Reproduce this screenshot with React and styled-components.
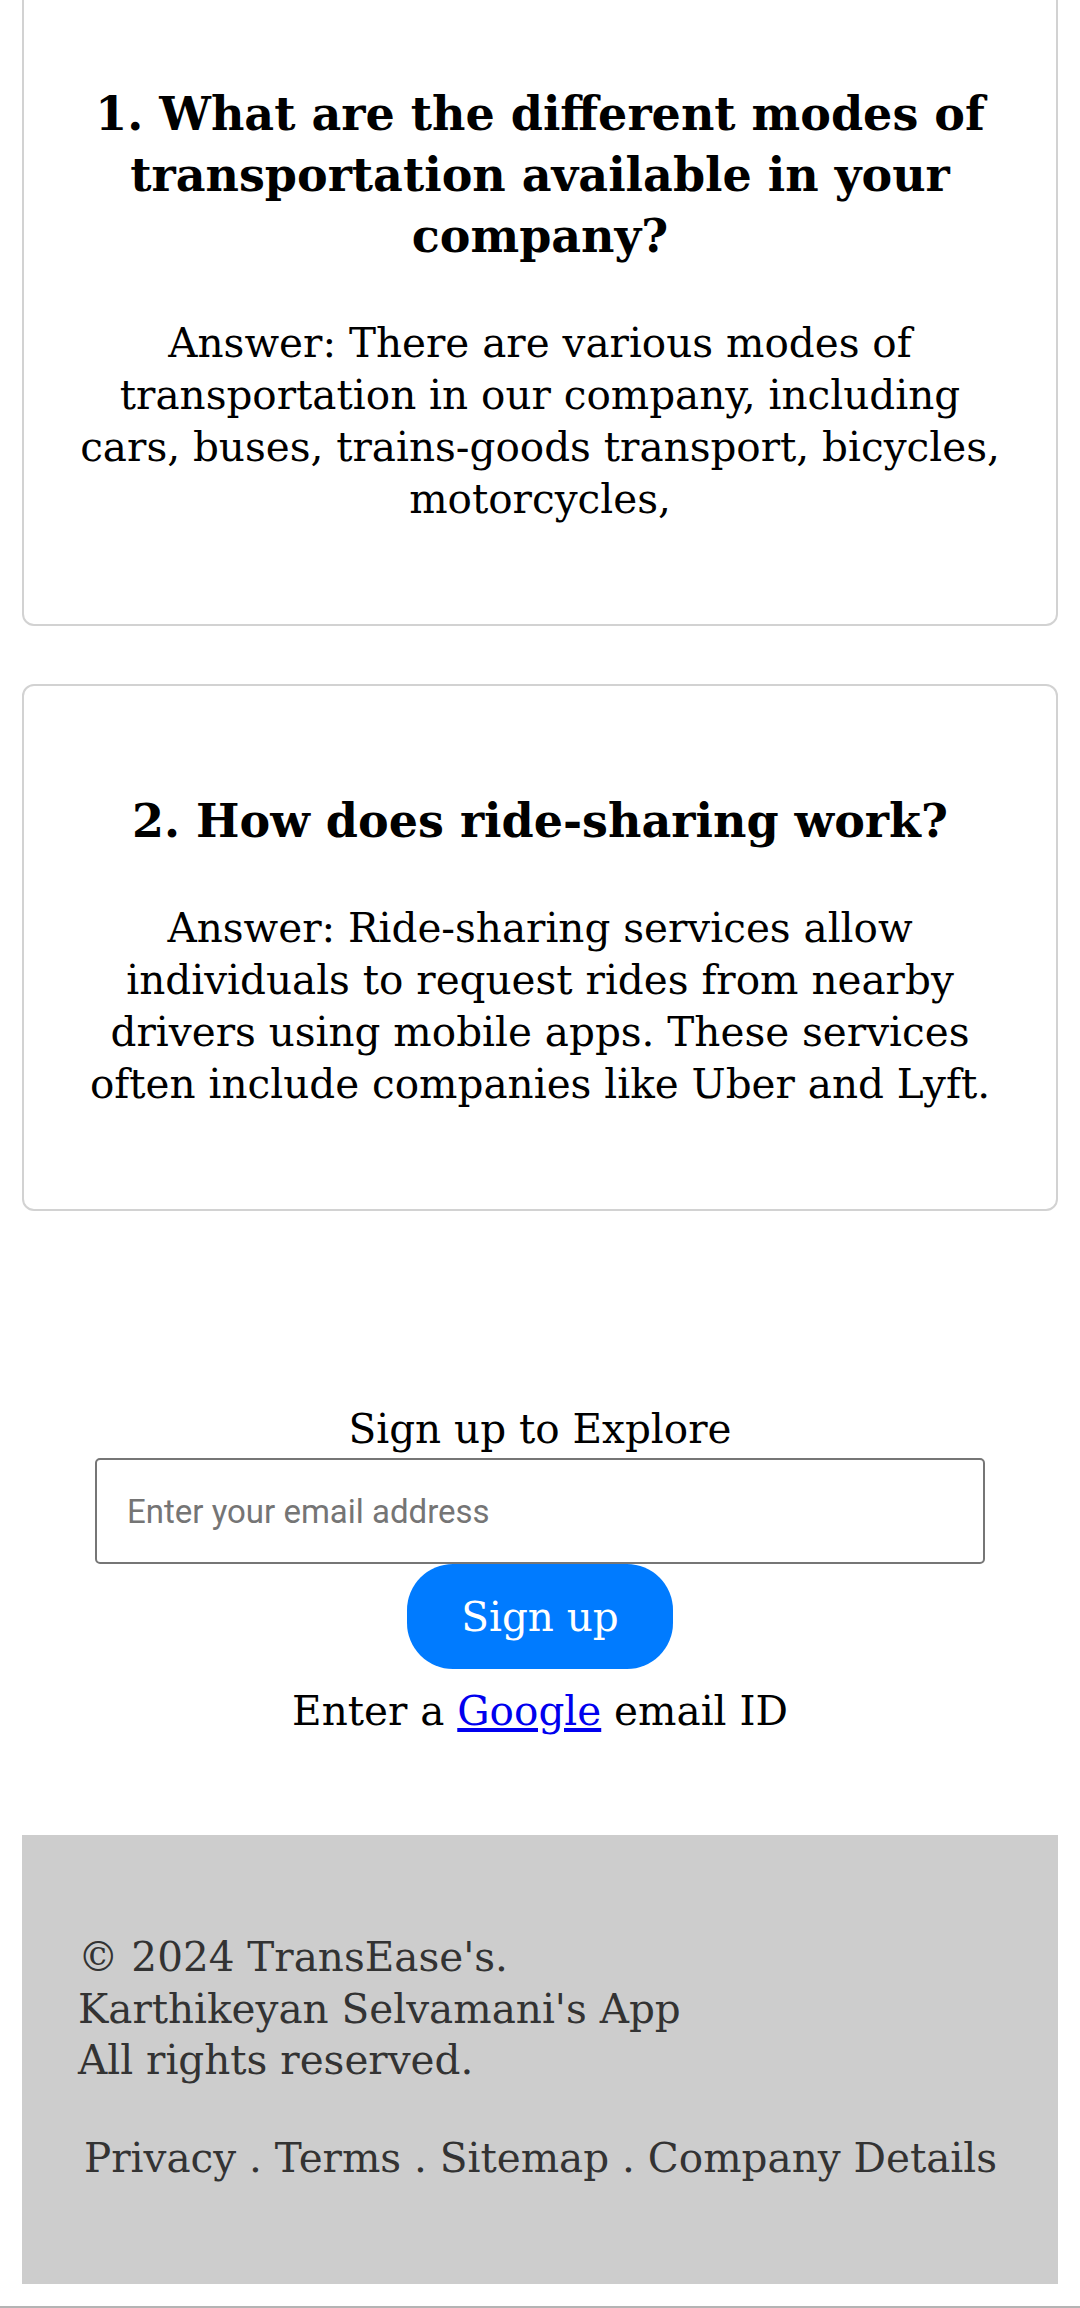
import React from 'react'
import styled, { createGlobalStyle } from 'styled-components'

const faqs = [
  {
    id: 1,
    question: '1. What are the different modes of transportation available in your company?',
    answer:
      'Answer: There are various modes of transportation in our company, including cars, buses, trains-goods transport, bicycles, motorcycles,'
  },
  {
    id: 2,
    question: '2. How does ride-sharing work?',
    answer:
      'Answer: Ride-sharing services allow individuals to request rides from nearby drivers using mobile apps. These services often include companies like Uber and Lyft.'
  }
]

const links = ['Privacy', 'Terms', 'Sitemap', 'Company Details']

const App = () => {
  return (
    <>
      <GlobalStyle />
      <DivPage>
        <DivFaqList>
          {faqs.map(faq => (
            <DivFaqCard key={faq.id}>
              <H3Question>{faq.question}</H3Question>
              <PAnswer>{faq.answer}</PAnswer>
            </DivFaqCard>
          ))}
        </DivFaqList>

        <DivSignUp>
          <LabelSignUp htmlFor="email">Sign up to Explore</LabelSignUp>
          <InputEmail id="email" type="email" placeholder="Enter your email address" />
          <ButtonSignUp>Sign up</ButtonSignUp>
          <PHint>
            Enter a <AGoogle href="#">Google</AGoogle> email ID
          </PHint>
        </DivSignUp>

        <FooterPage>
          <PCopyright>
            © 2024 TransEase's.
            <br />
            Karthikeyan Selvamani's App
            <br />
            All rights reserved.
          </PCopyright>
          <PLinks>{links.join(' . ')}</PLinks>
        </FooterPage>
        <DivBottomLine />
      </DivPage>
    </>
  )
}

const GlobalStyle = createGlobalStyle`
  body {
    margin: 0;
    background: #ffffff;
    font-family: "DejaVu Serif", "Liberation Serif", serif;
    color: #000000;
  }
`

const DivPage = styled.div`
  padding: 0 22px;
  margin-top: -23px;
`

const DivFaqList = styled.div`
  display: flex;
  flex-direction: column;
  gap: 58px;
`

const DivFaqCard = styled.div`
  border: 2px solid #d2d2d2;
  border-radius: 12px;
  padding: 105px 40px 99px;
  text-align: center;
`

const H3Question = styled.h3`
  margin: 0 0 50px;
  font-size: 46px;
  line-height: 61px;
  font-weight: bold;
`

const PAnswer = styled.p`
  margin: 0;
  font-size: 40.5px;
  line-height: 52px;
`

const DivSignUp = styled.div`
  display: flex;
  flex-direction: column;
  align-items: center;
  margin-top: 192px;
`

const LabelSignUp = styled.label`
  font-size: 40.5px;
  line-height: 52px;
  margin-bottom: 3px;
`

const InputEmail = styled.input`
  box-sizing: border-box;
  width: 890px;
  height: 106px;
  padding: 0 30px;
  border: 2px solid #767676;
  border-radius: 5px;
  font-family: Roboto, "Noto Sans", sans-serif;
  font-size: 33px;
  color: #000;
  outline: none;

  &::placeholder {
    color: #757575;
  }
`

const ButtonSignUp = styled.button`
  width: 266px;
  height: 105px;
  border: none;
  border-radius: 46px;
  background: #007bff;
  color: #ffffff;
  font-family: "DejaVu Serif", serif;
  font-size: 40.5px;
  cursor: pointer;
`

const PHint = styled.p`
  margin: 16px 0 0;
  font-size: 40.5px;
  line-height: 52px;
`

const AGoogle = styled.a`
  color: #0000ee;
  text-decoration: underline;
`

const FooterPage = styled.footer`
  margin-top: 98px;
  background: #cdcdcd;
  padding: 97px 56px 100px;
  color: #333333;
`

const PCopyright = styled.p`
  margin: 0;
  font-size: 40.5px;
  line-height: 51.5px;
`

const PLinks = styled.p`
  margin: 45px 0 0 6px;
  font-size: 40.5px;
  line-height: 52px;
`

const DivBottomLine = styled.div`
  margin: 22px -22px 0;
  border-top: 2px solid #b4b4b4;
`

export default App
